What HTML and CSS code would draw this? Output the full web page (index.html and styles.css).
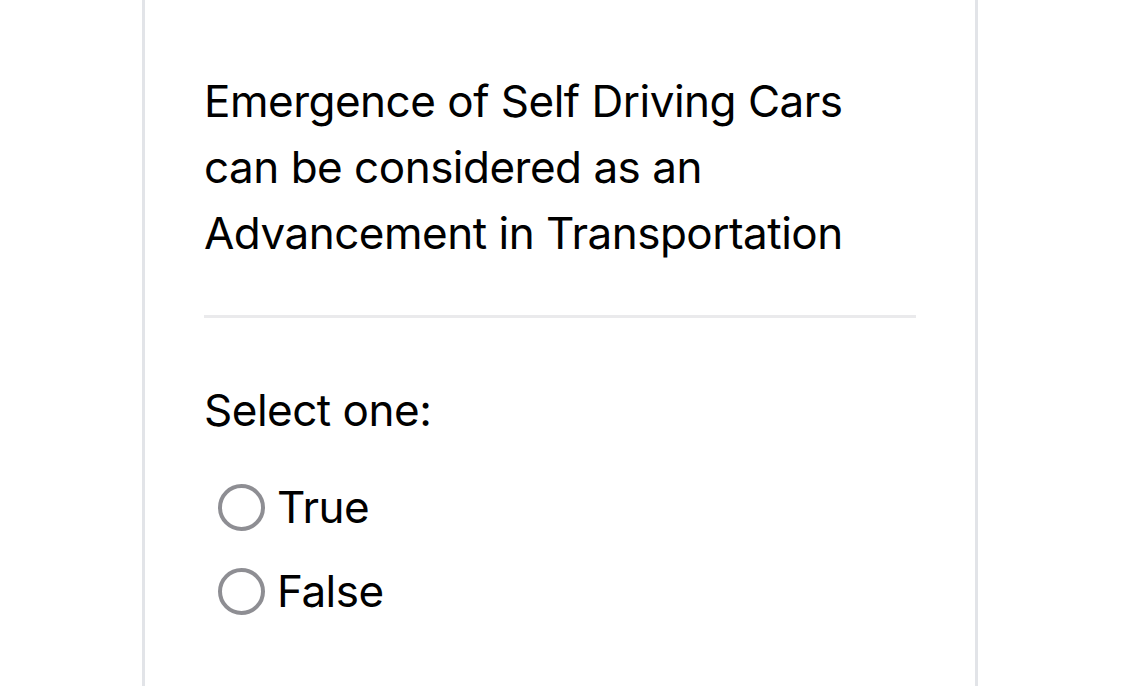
FILE: index.html
```html
<!DOCTYPE html>
<html>
<head>
<meta charset="utf-8">
<link rel="stylesheet" href="styles.css">
</head>
<body>
<div class="page">
  <div class="card">
    <div class="question">Emergence of Self Driving Cars can be considered as an Advancement in Transportation</div>
    <hr class="divider">
    <div class="prompt">Select one:</div>
    <div class="options">
      <label class="option"><span class="radio"></span><span class="label">True</span></label>
      <label class="option"><span class="radio"></span><span class="label">False</span></label>
    </div>
  </div>
</div>
</body>
</html>
```
FILE: styles.css
```css
html, body {
  margin: 0;
  padding: 0;
  background: #ffffff;
  height: 100%;
  overflow: hidden;
}
body {
  font-family: Inter, "Liberation Sans", sans-serif;
  color: #000000;
}
.page {
  padding-left: 142px;
  height: 100%;
}
.card {
  width: 836px;
  height: 100%;
  box-sizing: border-box;
  border-left: 3px solid #e2e4e8;
  border-right: 3px solid #e2e4e8;
  padding: 68px 59px 0 59px;
}
.question {
  font-size: 44px;
  line-height: 66px;
  letter-spacing: -0.5px;
}
.divider {
  border: 0;
  height: 3px;
  background: #eaeaec;
  margin: 49px 0 0 0;
}
.prompt {
  font-size: 44px;
  line-height: 66px;
  letter-spacing: -0.5px;
  margin-top: 59px;
}
.options {
  display: flex;
  flex-direction: column;
  gap: 20px;
  margin-top: 32px;
  padding-left: 14px;
}
.option {
  display: flex;
  align-items: center;
  gap: 12px;
  height: 64px;
}
.radio {
  width: 47px;
  height: 47px;
  box-sizing: border-box;
  border: 4px solid #8e8e93;
  border-radius: 50%;
  flex: none;
}
.label {
  font-size: 44px;
  letter-spacing: -0.5px;
  line-height: 64px;
}
```
